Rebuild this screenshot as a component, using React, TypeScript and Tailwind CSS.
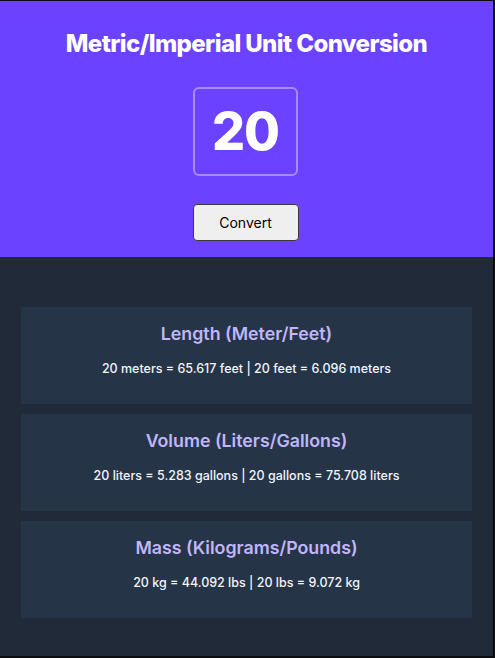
import { useState } from "react"

const font = { fontFamily: "Inter, 'Noto Sans', sans-serif" }

type Row = { title: string; text: string }

export default function App() {
  const [value] = useState(20)

  const rows: Row[] = [
    { title: "Length (Meter/Feet)", text: `${value} meters = 65.617 feet | ${value} feet = 6.096 meters` },
    { title: "Volume (Liters/Gallons)", text: `${value} liters = 5.283 gallons | ${value} gallons = 75.708 liters` },
    { title: "Mass (Kilograms/Pounds)", text: `${value} kg = 44.092 lbs | ${value} lbs = 9.072 kg` },
  ]

  return (
    <div
      className="w-[495px] h-[658px] flex flex-col bg-[#212a39] border-t border-r-2 border-b-2 border-[#0b0d12] overflow-hidden"
      style={font}
    >
      {/* header */}
      <div className="bg-[#6a42ff] flex flex-col items-center h-[256px] pt-[30px]">
        <h1 className="text-white text-[24px] font-extrabold tracking-[-0.025em] leading-[26px]">
          Metric/Imperial Unit Conversion
        </h1>
        <div className="mt-[30px] -ml-[2px] w-[105px] h-[89px] rounded-[6px] border-2 border-white/40 flex items-center justify-center">
          <span className="text-white text-[52px] font-extrabold leading-none tracking-[-0.02em]">{value}</span>
        </div>
        <button className="mt-[28px] -ml-[2px] w-[106px] h-[37px] bg-[#efefef] border border-[#3a3a3a] rounded-[4px] text-[14px] text-black">
          Convert
        </button>
      </div>

      {/* results */}
      <div className="flex flex-col gap-[10px] px-[21px] pt-[50px]">
        {rows.map((r) => (
          <div key={r.title} className="bg-[#263447] h-[97px] flex flex-col items-center pt-[16px]">
            <h2 className="text-[#c0b6fb] text-[17.8px] font-semibold leading-[22px]">{r.title}</h2>
            <p className="mt-[16px] text-[#f1f3f7] text-[12.5px] font-medium leading-[16px]">{r.text}</p>
          </div>
        ))}
      </div>
    </div>
  )
}
